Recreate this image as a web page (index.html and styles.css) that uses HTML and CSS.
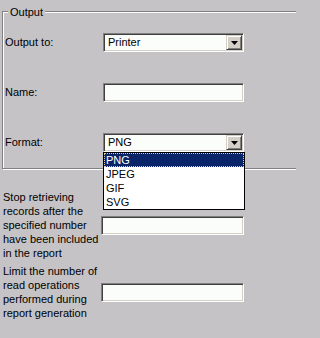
FILE: index.html
```html
<!DOCTYPE html>
<html>
<head>
<meta charset="utf-8">
<link rel="stylesheet" href="styles.css">
</head>
<body>
<div class="page">
  <div class="group">
    <div class="legend">Output</div>
    <div class="group-grid">
      <div class="lbl">Output to:</div>
      <div class="combo">
        <span class="val">Printer</span>
        <span class="btn"><svg width="7" height="4" viewBox="0 0 7 4"><path d="M0 0H7L3.5 4Z" fill="#000"/></svg></span>
      </div>
      <div class="lbl">Name:</div>
      <div class="field"></div>
      <div class="lbl">Format:</div>
      <div class="combo-wrap">
        <div class="combo">
          <span class="val">PNG</span>
          <span class="btn"><svg width="7" height="4" viewBox="0 0 7 4"><path d="M0 0H7L3.5 4Z" fill="#000"/></svg></span>
        </div>
        <ul class="list">
          <li class="sel">PNG</li>
          <li>JPEG</li>
          <li>GIF</li>
          <li>SVG</li>
        </ul>
      </div>
    </div>
  </div>
  <div class="lower-grid">
    <div class="desc">Stop retrieving records after the specified number have been included in the report</div>
    <div class="field wide"></div>
    <div class="desc">Limit the number of read operations performed during report generation</div>
    <div class="field wide"></div>
  </div>
</div>
</body>
</html>
```
FILE: styles.css
```css
html, body {
  margin: 0;
  padding: 0;
  background: #c5c3c6;
  overflow: hidden;
}
body {
  width: 296px;
  height: 338px;
  font-family: "Liberation Sans", Arial, sans-serif;
  font-size: 11px;
  color: #000;
}
.page {
  width: 296px;
  height: 338px;
  overflow: hidden;
  padding-top: 11px;
  box-sizing: border-box;
}
.group {
  position: relative;
  margin-left: 2px;
  width: 300px;
  border: 1px solid #808080;
  box-shadow: inset 1px 1px 0 #fff, 1px 1px 0 #fff;
}
.legend {
  position: absolute;
  top: -6px;
  left: 5px;
  padding: 0 2px;
  line-height: 13px;
  background: #c5c3c6;
}
.group-grid {
  display: grid;
  grid-template-columns: 98px 141px;
  grid-auto-rows: 19px;
  row-gap: 31px;
  align-items: center;
  padding: 21px 0 16px 2px;
}
.lbl {
  line-height: 13px;
}
.combo, .field {
  box-sizing: border-box;
  height: 19px;
  border: 1px solid;
  border-color: #808080 #fff #fff #808080;
  box-shadow: inset 1px 1px 0 #404040, inset -1px -1px 0 #d4d0c8;
  background: #fafdfa;
}
.combo {
  display: flex;
  align-items: center;
  padding: 1px;
}
.combo .val {
  flex: 1;
  padding-left: 3px;
  line-height: 15px;
}
.btn {
  box-sizing: border-box;
  width: 16px;
  height: 15px;
  background: #d4d0c8;
  border: 1px solid;
  border-color: #d4d0c8 #404040 #404040 #d4d0c8;
  box-shadow: inset 1px 1px 0 #fff, inset -1px -1px 0 #808080;
  display: flex;
  align-items: center;
  justify-content: center;
}
.btn svg {
  display: block;
}
.combo-wrap {
  position: relative;
  height: 19px;
}
.list {
  position: absolute;
  top: 19px;
  left: 0;
  width: 142px;
  box-sizing: border-box;
  margin: 0;
  padding: 0;
  list-style: none;
  background: #fff;
  border: 1px solid #000;
  z-index: 2;
}
.list li {
  height: 14px;
  line-height: 14px;
  padding-left: 2px;
}
.list li.sel {
  background: #0a246a;
  color: #fff;
  outline: 1px dotted #e8d08a;
  outline-offset: -1px;
}
.lower-grid {
  display: grid;
  grid-template-columns: 98px 143px;
  row-gap: 4px;
  align-items: center;
  padding-left: 3px;
  margin-top: 21px;
}
.desc {
  line-height: 14px;
}
.field.wide {
  width: 143px;
}
```
